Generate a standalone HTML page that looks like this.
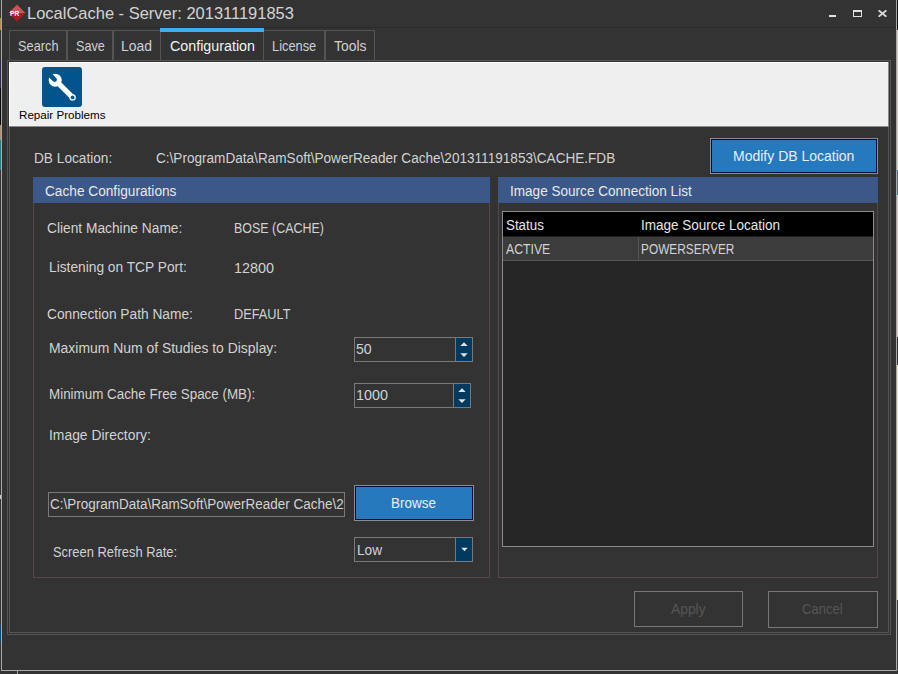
<!DOCTYPE html>
<html><head><meta charset="utf-8"><style>
html,body{margin:0;padding:0;}
body{width:898px;height:674px;position:relative;overflow:hidden;background:#333333;font-family:"Liberation Sans",sans-serif;}
body div{position:absolute;box-sizing:content-box;}
.t{white-space:pre;transform-origin:0 0;}
</style></head><body>
<div style="left:0px;top:0px;width:1px;height:674px;background:#333333;"></div>
<div style="left:0px;top:18px;width:1px;height:12px;background:#b88848;"></div>
<div style="left:0px;top:60px;width:1px;height:28px;background:#28284a;"></div>
<div style="left:0px;top:88px;width:1px;height:37px;background:#080808;"></div>
<div style="left:0px;top:125px;width:1px;height:15px;background:#a89070;"></div>
<div style="left:0px;top:140px;width:1px;height:30px;background:#2a7a88;"></div>
<div style="left:0px;top:495px;width:1px;height:4px;background:#c8c8c8;"></div>
<div style="left:0px;top:625px;width:1px;height:17px;background:#0a4a78;"></div>
<div style="left:0px;top:671px;width:898px;height:3px;background:#333333;"></div>
<div style="left:897px;top:0px;width:1px;height:30px;background:#101010;"></div>
<div style="left:897px;top:30px;width:1px;height:140px;background:#e0c8c8;"></div>
<div style="left:897px;top:170px;width:1px;height:25px;background:#2a8080;"></div>
<div style="left:897px;top:195px;width:1px;height:142px;background:#d8c8c8;"></div>
<div style="left:897px;top:337px;width:1px;height:28px;background:#303030;"></div>
<div style="left:897px;top:365px;width:1px;height:235px;background:#e8e8b8;"></div>
<div style="left:897px;top:600px;width:1px;height:74px;background:#3a3a3a;"></div>
<div style="left:1px;top:0px;width:1px;height:671px;background:#a9a9a9;"></div>
<div style="left:1px;top:670px;width:896px;height:1px;background:#a9a9a9;"></div>
<div style="left:896px;top:0px;width:1px;height:671px;background:#a9a9a9;"></div>
<div style="left:17px;top:671px;width:1px;height:3px;background:#a0a0a0;"></div>
<div style="left:2px;top:27px;width:894px;height:1px;background:#2a2a2a;"></div>
<svg style="position:absolute;left:8px;top:4px" width="18" height="18" viewBox="0 0 18 18">
<path d="M9 0.7 L17.3 9 L9 17.3 L0.7 9 Z" fill="#b3222a"/>
<path d="M9 0.7 L17.3 9 L0.7 9 Z" fill="#c8545b"/>
<path d="M17.3 9 L9 17.3 L3 11.3 Z" fill="#a51b22"/>
<text x="6.6" y="11.8" font-family="Liberation Sans" font-weight="bold" font-size="6.6" fill="#fff" text-anchor="middle">PR</text></svg>
<div style="left:829px;top:15px;width:7px;height:2px;background:#e0e0e0;"></div>
<div style="left:853px;top:10px;width:7px;height:4px;border:1px solid #e0e0e0;border-top-width:2px"></div>
<svg style="position:absolute;left:878px;top:10px" width="9" height="7" viewBox="0 0 9 7"><path d="M0.6 0.3 L8.4 6.7 M8.4 0.3 L0.6 6.7" stroke="#d8d8d8" stroke-width="1.9"/></svg>
<div style="left:7px;top:60px;width:882px;height:573px;border:1px solid #555555;"></div>
<div style="left:9px;top:62px;width:878px;height:569px;border:1px solid #555555;"></div>
<div style="left:9px;top:30px;width:56px;height:30px;border:1px solid #555555;border-bottom:none"></div>
<div style="left:67px;top:30px;width:44px;height:30px;border:1px solid #555555;border-bottom:none"></div>
<div style="left:113px;top:30px;width:46px;height:30px;border:1px solid #555555;border-bottom:none"></div>
<div style="left:263px;top:30px;width:60px;height:30px;border:1px solid #555555;border-bottom:none"></div>
<div style="left:325px;top:30px;width:48px;height:30px;border:1px solid #555555;border-bottom:none"></div>
<div style="left:160px;top:28px;width:104px;height:4px;background:#3fb0ec;"></div>
<div style="left:9px;top:62px;width:879px;height:64px;background:#ffffff;"></div>
<div style="left:10px;top:63px;width:878px;height:63px;background:#efefef;"></div>
<div style="left:888px;top:62px;width:1px;height:65px;background:#8a8a8a;"></div>
<div style="left:9px;top:126px;width:880px;height:1px;background:#8a8a8a;"></div>
<svg style="position:absolute;left:42px;top:67px" width="40" height="40" viewBox="0 0 40 40">
<rect x="0" y="0" width="40" height="40" rx="3" fill="#02548f"/>
<circle cx="13.2" cy="13.2" r="6.5" fill="#fff"/>
<line x1="13.2" y1="13.2" x2="30.6" y2="30.4" stroke="#fff" stroke-width="5.2" stroke-linecap="round"/>
<line x1="4" y1="4" x2="12.6" y2="12.6" stroke="#02548f" stroke-width="4.6" stroke-linecap="round"/>
<circle cx="30.6" cy="30.4" r="3.2" fill="#fff"/><circle cx="30.6" cy="30.4" r="1.9" fill="#02548f"/>
</svg>
<div style="left:710px;top:138px;width:166px;height:34px;border:1px solid #8c8c8c;"></div>
<div style="left:711px;top:139px;width:164px;height:32px;border:1px solid #0a0a48;background:#2679bd;"></div>
<div style="left:33px;top:177px;width:455px;height:399px;border:1px solid #554949;"></div>
<div style="left:33px;top:177px;width:457px;height:26px;background:#3b5889;"></div>
<div style="left:498px;top:177px;width:378px;height:399px;border:1px solid #554949;"></div>
<div style="left:498px;top:177px;width:380px;height:26px;background:#3b5889;"></div>
<div style="left:502px;top:211px;width:370px;height:334px;border:1px solid #8a8a8a;background:#262626;"></div>
<div style="left:503px;top:212px;width:370px;height:24px;background:#000000;"></div>
<div style="left:503px;top:236px;width:370px;height:1px;background:#1e1e24;"></div>
<div style="left:503px;top:237px;width:370px;height:23px;background:#3c3c3c;"></div>
<div style="left:503px;top:260px;width:370px;height:1px;background:#555555;"></div>
<div style="left:638px;top:237px;width:1px;height:23px;background:#555555;"></div>
<div style="left:354px;top:337px;width:117px;height:23px;border:1px solid #7a7a7a;background:#333333;"></div><div style="left:455px;top:338px;width:1px;height:23px;background:#7a7a7a;"></div><div style="left:456px;top:338px;width:16px;height:23px;background:#003a5e;"></div><svg style="position:absolute;left:460.0px;top:342px" width="8" height="18" viewBox="0 0 8 18"><path d="M4 0.3 L7.7 4 L0.3 4 Z M0.3 11.2 L7.7 11.2 L4 14.9 Z" fill="#e4e4e4"/></svg>
<div style="left:354px;top:383px;width:115px;height:23px;border:1px solid #7a7a7a;background:#333333;"></div><div style="left:453px;top:384px;width:1px;height:23px;background:#7a7a7a;"></div><div style="left:454px;top:384px;width:16px;height:23px;background:#003a5e;"></div><svg style="position:absolute;left:458.0px;top:388px" width="8" height="18" viewBox="0 0 8 18"><path d="M4 0.3 L7.7 4 L0.3 4 Z M0.3 11.2 L7.7 11.2 L4 14.9 Z" fill="#e4e4e4"/></svg>
<div style="left:48px;top:492px;width:295px;height:23px;border:1px solid #7a7a7a;background:#333333;"></div>
<div style="left:354px;top:485px;width:118px;height:34px;border:1px solid #8c8c8c;"></div>
<div style="left:355px;top:486px;width:116px;height:32px;border:1px solid #0a0a48;background:#2679bd;"></div>
<div style="left:354px;top:537px;width:117px;height:23px;border:1px solid #7a7a7a;background:#333333;"></div>
<div style="left:455px;top:538px;width:1px;height:23px;background:#7a7a7a;"></div>
<div style="left:456px;top:538px;width:16px;height:23px;background:#003a5e;"></div>
<svg style="position:absolute;left:461px;top:547px" width="8" height="6" viewBox="0 0 8 6"><path d="M0.3 0.7 L6.7 0.7 L3.5 4.3 Z" fill="#e4e4e4"/></svg>
<div style="left:634px;top:591px;width:107px;height:34px;border:1px solid #787878;"></div>
<div style="left:768px;top:591px;width:108px;height:35px;border:1px solid #787878;"></div>

<div class="t" style="left:26.68px;top:5.22px;font-size:17.39px;line-height:17.39px;color:#d4d4d4;transform:scaleX(0.9486)">LocalCache - Server: 201311191853</div>
<div class="t" style="left:17.86px;top:38.98px;font-size:14.49px;line-height:14.49px;color:#d0d0d0;transform:scaleX(0.8823)">Search</div>
<div class="t" style="left:75.77px;top:38.98px;font-size:14.49px;line-height:14.49px;color:#d0d0d0;transform:scaleX(0.8736)">Save</div>
<div class="t" style="left:121.39px;top:38.98px;font-size:14.49px;line-height:14.49px;color:#d0d0d0;transform:scaleX(0.9587)">Load</div>
<div class="t" style="left:169.59px;top:38.98px;font-size:14.49px;line-height:14.49px;color:#f2f2f2;transform:scaleX(0.9859)">Configuration</div>
<div class="t" style="left:272.17px;top:38.98px;font-size:14.49px;line-height:14.49px;color:#d0d0d0;transform:scaleX(0.8854)">License</div>
<div class="t" style="left:333.92px;top:38.98px;font-size:14.49px;line-height:14.49px;color:#d0d0d0;transform:scaleX(0.9593)">Tools</div>
<div class="t" style="left:18.67px;top:110.44px;font-size:11.59px;line-height:11.59px;color:#000000;transform:scaleX(1.0037)">Repair Problems</div>
<div class="t" style="left:33.91px;top:150.98px;font-size:14.49px;line-height:14.49px;color:#d2d2d2;transform:scaleX(0.9436)">DB Location:</div>
<div class="t" style="left:155.52px;top:150.98px;font-size:14.49px;line-height:14.49px;color:#d2d2d2;transform:scaleX(0.9377)">C:\ProgramData\RamSoft\PowerReader Cache\201311191853\CACHE.FDB</div>
<div class="t" style="left:732.78px;top:148.98px;font-size:14.49px;line-height:14.49px;color:#e6eef6;transform:scaleX(0.9666)">Modify DB Location</div>
<div class="t" style="left:45.02px;top:183.98px;font-size:14.49px;line-height:14.49px;color:#e8e8e8;transform:scaleX(0.9434)">Cache Configurations</div>
<div class="t" style="left:509.78px;top:183.98px;font-size:14.49px;line-height:14.49px;color:#e8e8e8;transform:scaleX(0.9364)">Image Source Connection List</div>
<div class="t" style="left:46.81px;top:220.98px;font-size:14.49px;line-height:14.49px;color:#d2d2d2;transform:scaleX(0.9496)">Client Machine Name:</div>
<div class="t" style="left:233.80px;top:220.98px;font-size:14.49px;line-height:14.49px;color:#d2d2d2;transform:scaleX(0.8596)">BOSE (CACHE)</div>
<div class="t" style="left:48.70px;top:259.98px;font-size:14.49px;line-height:14.49px;color:#d2d2d2;transform:scaleX(0.9492)">Listening on TCP Port:</div>
<div class="t" style="left:234.35px;top:260.98px;font-size:14.49px;line-height:14.49px;color:#d2d2d2;transform:scaleX(0.9909)">12800</div>
<div class="t" style="left:46.71px;top:306.98px;font-size:14.49px;line-height:14.49px;color:#d2d2d2;transform:scaleX(0.9488)">Connection Path Name:</div>
<div class="t" style="left:233.98px;top:306.98px;font-size:14.49px;line-height:14.49px;color:#d2d2d2;transform:scaleX(0.8801)">DEFAULT</div>
<div class="t" style="left:48.99px;top:340.98px;font-size:14.49px;line-height:14.49px;color:#d2d2d2;transform:scaleX(0.9610)">Maximum Num of Studies to Display:</div>
<div class="t" style="left:356.34px;top:341.98px;font-size:14.49px;line-height:14.49px;color:#d2d2d2;transform:scaleX(0.9714)">50</div>
<div class="t" style="left:48.93px;top:386.98px;font-size:14.49px;line-height:14.49px;color:#d2d2d2;transform:scaleX(0.9248)">Minimum Cache Free Space (MB):</div>
<div class="t" style="left:356.05px;top:387.98px;font-size:14.49px;line-height:14.49px;color:#d2d2d2;transform:scaleX(0.9890)">1000</div>
<div class="t" style="left:49.15px;top:427.98px;font-size:14.49px;line-height:14.49px;color:#d2d2d2;transform:scaleX(0.9583)">Image Directory:</div>
<div class="t" style="left:49.73px;top:496.98px;font-size:14.49px;line-height:14.49px;color:#d2d2d2;transform:scaleX(0.9308)">C:\ProgramData\RamSoft\PowerReader Cache\2</div>
<div class="t" style="left:390.72px;top:495.98px;font-size:14.49px;line-height:14.49px;color:#e6eef6;transform:scaleX(0.9307)">Browse</div>
<div class="t" style="left:52.85px;top:544.98px;font-size:14.49px;line-height:14.49px;color:#d2d2d2;transform:scaleX(0.8911)">Screen Refresh Rate:</div>
<div class="t" style="left:356.50px;top:542.98px;font-size:14.49px;line-height:14.49px;color:#d2d2d2;transform:scaleX(0.9448)">Low</div>
<div class="t" style="left:506.03px;top:217.98px;font-size:14.49px;line-height:14.49px;color:#e6e6e6;transform:scaleX(0.9208)">Status</div>
<div class="t" style="left:640.78px;top:217.98px;font-size:14.49px;line-height:14.49px;color:#e6e6e6;transform:scaleX(0.9332)">Image Source Location</div>
<div class="t" style="left:505.70px;top:241.98px;font-size:14.49px;line-height:14.49px;color:#d2d2d2;transform:scaleX(0.8466)">ACTIVE</div>
<div class="t" style="left:641.05px;top:241.98px;font-size:14.49px;line-height:14.49px;color:#d2d2d2;transform:scaleX(0.8193)">POWERSERVER</div>
<div class="t" style="left:670.50px;top:601.98px;font-size:14.49px;line-height:14.49px;color:#565656;transform:scaleX(0.9550)">Apply</div>
<div class="t" style="left:801.85px;top:601.98px;font-size:14.49px;line-height:14.49px;color:#565656;transform:scaleX(0.8993)">Cancel</div>
</body></html>
